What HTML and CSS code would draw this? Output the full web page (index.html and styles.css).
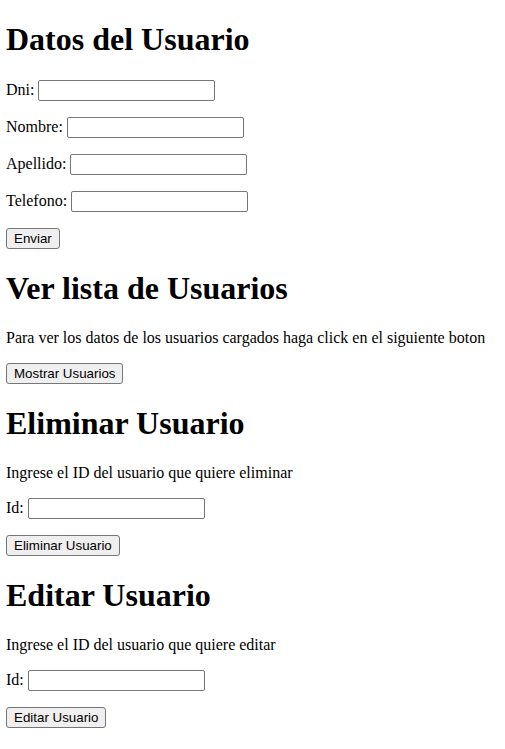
FILE: index.html
```html
<!DOCTYPE html>
<html>
<head>
<meta charset="utf-8">
<link rel="stylesheet" href="styles.css">
</head>
<body>
<h1 class="title">Datos del Usuario</h1>
<form class="form">
<p class="row"><label>Dni: </label><input class="field" type="text"></p>
<p class="row"><label>Nombre: </label><input class="field" type="text"></p>
<p class="row"><label>Apellido: </label><input class="field" type="text"></p>
<p class="row"><label>Telefono: </label><input class="field" type="text"></p>
<button class="btn" type="button">Enviar</button>
</form>
<h1 class="title">Ver lista de Usuarios</h1>
<p class="row">Para ver los datos de los usuarios cargados haga click en el siguiente boton</p>
<button class="btn" type="button">Mostrar Usuarios</button>
<h1 class="title">Eliminar Usuario</h1>
<p class="row">Ingrese el ID del usuario que quiere eliminar</p>
<p class="row"><label>Id: </label><input class="field" type="text"></p>
<button class="btn" type="button">Eliminar Usuario</button>
<h1 class="title">Editar Usuario</h1>
<p class="row">Ingrese el ID del usuario que quiere editar</p>
<p class="row"><label>Id: </label><input class="field" type="text"></p>
<button class="btn" type="button">Editar Usuario</button>
</body>
</html>
```
FILE: styles.css
```css
html {
  background: #fff;
}
body {
  margin: 0 6px 8px;
  font-family: "Liberation Serif", "Times New Roman", serif;
  font-size: 16px;
  color: #000;
}
.title {
  font-size: 32px;
  font-weight: bold;
  margin: 21.44px 0;
}
.form {
  margin: 0;
}
.row {
  margin: 16px 0;
}
.field {
  box-sizing: border-box;
  width: 177px;
  height: 21px;
  padding: 1px 2px;
  border: 1px solid #767676;
  border-radius: 2px;
  font-family: "Liberation Sans", Arial, sans-serif;
  font-size: 13.33px;
  vertical-align: baseline;
}
.btn {
  box-sizing: border-box;
  height: 21px;
  font-family: "Liberation Sans", Arial, sans-serif;
  font-size: 13.33px;
  padding: 1px 7px;
  border: 1px solid #767676;
  border-radius: 3px;
  background: #efefef;
  color: #000;
}
```
